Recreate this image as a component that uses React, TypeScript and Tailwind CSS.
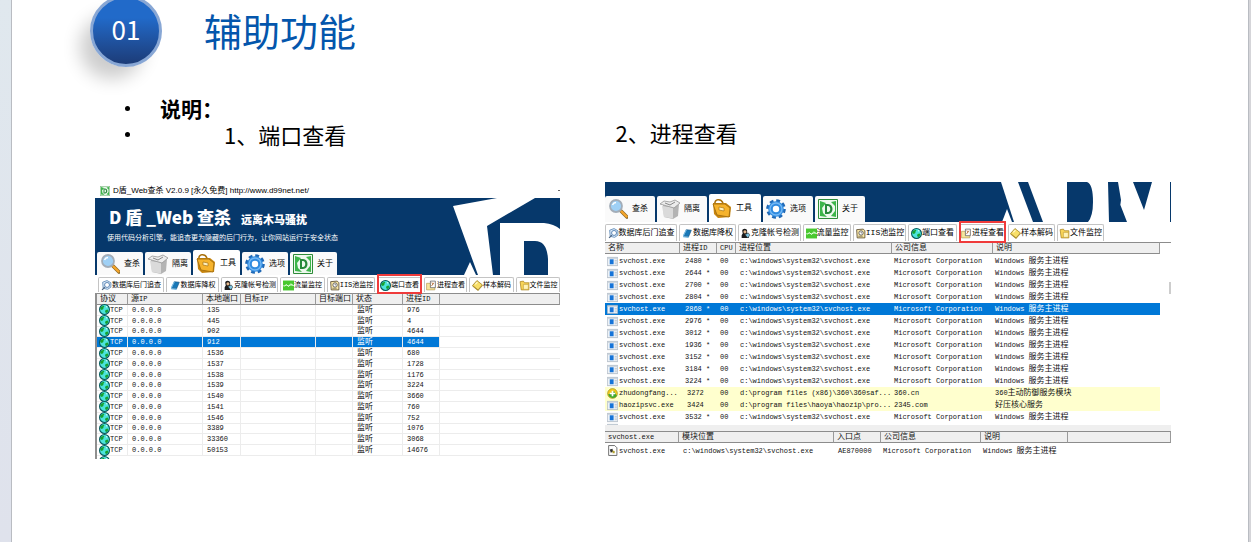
import React from "react";

type IconName =
  | "search" | "box" | "case" | "gear" | "logo"
  | "db" | "book" | "user" | "chart" | "note" | "globe" | "proc" | "gem" | "folder"
  | "exe" | "shield" | "module";

function Icon({ name, className }: { name: IconName; className: string }) {
  const art: Record<IconName, React.ReactNode> = {
    search: (
      <>
        <path d="M13 12l6 6" stroke="#8a6a2a" strokeWidth="3.6" strokeLinecap="round" />
        <path d="M13.5 12.5l5 5" stroke="#f5a52a" strokeWidth="2.4" strokeLinecap="round" />
        <circle cx="8" cy="7" r="6" fill="#9fd0f5" stroke="#a3adb8" strokeWidth="1.8" />
        <path d="M4.5 6a4 4 0 013.500-2.500" stroke="#fff" strokeWidth="1.400" fill="none" />
      </>
    ),
    box: (
      <>
        <path d="M3 6l10 2 6-3-1 12-5 3-9-2z" fill="#b4b4b4" />
        <path d="M2 7l11 1.500v11L4 18z" fill="#dadada" />
        <path d="M0 5l4-3 6 1 5-2 5 3-6 5z" fill="#ececec" stroke="#969696" strokeWidth=".8" />
        <path d="M5 4l5 2 5-3" stroke="#888" strokeWidth="1" fill="none" />
      </>
    ),
    case: (
      <>
        <path d="M3 6c-1-5 6-6 8-1" stroke="#a8700c" strokeWidth="1.600" fill="none" />
        <path d="M1 5l13 0 5 4-1 10-12 1-4-4z" fill="#c8860f" />
        <path d="M1 6l12 0 5 4-1 9-12-2z" fill="#f6b32c" stroke="#9b680c" strokeWidth=".8" />
        <path d="M7 9l5 1v3l-5-1z" fill="#fff0bd" stroke="#9b680c" strokeWidth=".6" />
      </>
    ),
    gear: (
      <>
        <circle cx="10" cy="10" r="8" fill="none" stroke="#1f68b5" strokeWidth="3.600" strokeDasharray="3.600 2.680" />
        <circle cx="10" cy="10" r="5.500" fill="#fff" stroke="#2f8be0" strokeWidth="4.600" />
        <circle cx="10" cy="10" r="6" fill="none" stroke="#74b8f4" strokeWidth="1.400" />
      </>
    ),
    logo: (
      <>
        <path d="M.5.500h19v19H.5z" fill="#eef8ee" stroke="#2e8c39" />
        <path d="M2 2l6 2-4 5 1 5 4 4-7-1zM18 18l-5-1 4-5V7l-4-4 5-1z" fill="#3db54a" />
        <path d="M7 5v10h3c6 0 6-10 0-10zm2 2h1c3 0 3 6 0 6H9z" fill="#27893a" fillRule="evenodd" />
      </>
    ),
    db: (
      <>
        <path d="M3 4l8-3 7 4v8l-6 4-8-2z" fill="#d9e9f8" stroke="#5b87b5" strokeWidth="1.500" />
        <circle cx="11" cy="9" r="4.500" fill="#fff" stroke="#4a78ab" strokeWidth="1.600" />
        <path d="M7 13l-5 5" stroke="#4d6684" strokeWidth="2.400" />
      </>
    ),
    book: (
      <>
        <path d="M8 3l9 1-5 12-9-1z" fill="#1878b8" stroke="#0c4a78" />
        <path d="M8 3L3 13v3l9 1" fill="none" stroke="#72b9e4" strokeWidth="2" />
      </>
    ),
    user: (
      <>
        <path d="M4 5c0-5 9-5 9 0v4l3 4v5H3v-5l2-3z" fill="#1c1c1c" />
        <circle cx="9" cy="7" r="2.800" fill="#e5b88b" />
        <path d="M9 12l6-3 3 4-4 5z" fill="#7cc3e0" stroke="#222" />
      </>
    ),
    chart: (
      <>
        <path d="M0 1h20v18H0z" fill="#49c830" />
        <path d="M0 10h20" stroke="#d7ffd0" />
        <path d="M2 12l4-4 4 4 4-5 5 3" stroke="#e9ffe4" strokeWidth="1.800" fill="none" />
      </>
    ),
    note: (
      <>
        <path d="M3 3l12-1 3 3v13H4z" fill="#fbe9a8" stroke="#57492c" strokeWidth="1.500" />
        <circle cx="11" cy="9" r="4" fill="#fff" stroke="#444" strokeWidth="1.400" />
        <path d="M11 6.500V9h2M6 15h8" stroke="#333" fill="none" />
      </>
    ),
    globe: (
      <>
        <circle cx="10" cy="10" r="9" fill="#4be3dc" stroke="#08595c" strokeWidth="2" />
        <path d="M3 6l5-3 2 1-2 3 0 2-3 2-3-2zM12 11l4-1 1 3-4 4-2-3z" fill="#16a22e" />
        <path d="M12 3l4 2-2 2z" fill="#e6fffa" />
      </>
    ),
    proc: (
      <>
        <path d="M1 6h6l2 2h7v10H1z" fill="#f7e59b" stroke="#a58b3c" />
        <path d="M8 2h9v12H8z" fill="#fff" stroke="#555" strokeWidth="1.300" />
        <path d="M10 11l4-6M10 5l4 2" stroke="#b0662b" strokeWidth="1.500" />
      </>
    ),
    gem: (
      <>
        <path d="M9 1l10 8-8 9-10-8z" fill="#f8df69" stroke="#9a7a1c" strokeWidth="1.400" />
        <path d="M1 10l10 8 8-9v2l-8 9L1 12z" fill="#a98b28" />
        <path d="M6 8l4-4" stroke="#fff9d5" strokeWidth="2" />
      </>
    ),
    folder: (
      <>
        <path d="M2 3l6-1 2 3h8v13H4z" fill="#f8d458" stroke="#a5801a" strokeWidth="1.300" />
        <path d="M8 8h9v9H8z" fill="#fff3b8" stroke="#b9952f" />
      </>
    ),
    exe: (
      <>
        <path d="M.5 2.500h19v15H.5z" fill="#eef2f6" stroke="#8a98a8" />
        <path d="M1 3h18v2H1z" fill="#c3ced9" />
        <path d="M5 6h7v9H5z" fill="#1674d8" />
        <path d="M14 8h4M14 11h4M14 14h4" stroke="#9aa9b8" />
      </>
    ),
    shield: (
      <>
        <circle cx="10" cy="10" r="9" fill="#f3c81c" stroke="#8b8a1d" />
        <path d="M2 12a9 9 0 0016 2l-5-8z" fill="#41a82e" />
        <path d="M10 5v10M5 10h10" stroke="#fff" strokeWidth="3" />
      </>
    ),
    module: (
      <>
        <path d="M3 1h11l4 4v14H3z" fill="#fff" stroke="#555" strokeWidth="1.500" />
        <path d="M5 8l5-1 1 5-4 2z" fill="#333" />
        <path d="M10 10l4 1v4h-4z" fill="#b3a22e" />
      </>
    ),
  };
  return (
    <svg viewBox="0 0 20 20" fill="none" aria-hidden="true" className={"shrink-0 " + className}>
      {art[name]}
    </svg>
  );
}

/* Sets Latin runs one step smaller than the Chinese around them. */
function Mix({ text }: { text: string }) {
  const runs = text.split(/([\u4e00-\u9fff]+)/).filter(Boolean);
  return (
    <>
      {runs.map((run, i) =>
        /[\u4e00-\u9fff]/.test(run) ? (
          <span key={i}>{run}</span>
        ) : (
          <span key={i} className="text-[7px]">{run}</span>
        )
      )}
    </>
  );
}

type Tab = { icon: IconName; label: string; size: string };

function MainTabs({ tabs }: { tabs: Tab[] }) {
  return (
    <nav className="flex h-full items-end gap-[2px]">
      {tabs.map((t) => (
        <button
          key={t.label}
          type="button"
          className={
            "flex items-center gap-1 rounded-t-[2px] pl-[3px] text-[8px] leading-none text-black " +
            (t.label === "工具" ? "h-full bg-white " : "h-[calc(100%-2px)] bg-[#fafafa] ") +
            t.size
          }
        >
          <Icon name={t.icon} className="size-5" />
          <span>{t.label}</span>
        </button>
      ))}
    </nav>
  );
}

function SubTabs({ tabs, active, text }: { tabs: Tab[]; active: string; text: string }) {
  return (
    <nav className="flex gap-[2px] whitespace-nowrap">
      {tabs.map((t) => (
        <button
          key={t.label}
          type="button"
          className={
            "relative flex items-center justify-center rounded-t-[2px] border border-b-0 border-[#c4c4c4] bg-white leading-none text-black " +
            text + " " + t.size
          }
        >
          <Icon name={t.icon} className="size-[11px]" />
          <span>{t.label}</span>
          {t.label === active && (
            <span className="absolute -inset-x-px -top-[4px] -bottom-[2px] z-10 border-2 border-[#ef3b3b]" />
          )}
        </button>
      ))}
    </nav>
  );
}

const leftMain: Tab[] = [
  { icon: "search", label: "查杀", size: "w-[46px]" },
  { icon: "box", label: "隔离", size: "w-[46px]" },
  { icon: "case", label: "工具", size: "w-[47px]" },
  { icon: "gear", label: "选项", size: "w-[46px]" },
  { icon: "logo", label: "关于", size: "w-[47px]" },
];
const rightMain: Tab[] = [
  { icon: "search", label: "查杀", size: "w-[50px]" },
  { icon: "box", label: "隔离", size: "w-[50px]" },
  { icon: "case", label: "工具", size: "w-[52px]" },
  { icon: "gear", label: "选项", size: "w-[50px]" },
  { icon: "logo", label: "关于", size: "w-[50px]" },
];
const leftSub: Tab[] = [
  { icon: "db", label: "数据库后门追查", size: "w-[66px]" },
  { icon: "book", label: "数据库降权", size: "w-[53px]" },
  { icon: "user", label: "克隆帐号检测", size: "w-[57px]" },
  { icon: "chart", label: "流量监控", size: "w-[45px]" },
  { icon: "note", label: "IIS池监控", size: "w-[48px]" },
  { icon: "globe", label: "端口查看", size: "w-[45px]" },
  { icon: "proc", label: "进程查看", size: "w-[43px]" },
  { icon: "gem", label: "样本解码", size: "w-[45px]" },
  { icon: "folder", label: "文件监控", size: "w-[44px]" },
];
const rightSub: Tab[] = [
  { icon: "db", label: "数据库后门追查", size: "w-[72px]" },
  { icon: "book", label: "数据库降权", size: "w-[57px]" },
  { icon: "user", label: "克隆帐号检测", size: "w-[63px]" },
  { icon: "chart", label: "流量监控", size: "w-[48px]" },
  { icon: "note", label: "IIS池监控", size: "w-[53px]" },
  { icon: "globe", label: "端口查看", size: "w-[49px]" },
  { icon: "proc", label: "进程查看", size: "w-[47px]" },
  { icon: "gem", label: "样本解码", size: "w-[47px]" },
  { icon: "folder", label: "文件监控", size: "w-[47px]" },
];

const ports: [string, string][] = [
  ["135", "976"], ["445", "4"], ["902", "4644"], ["912", "4644"], ["1536", "680"],
  ["1537", "1728"], ["1538", "1176"], ["1539", "3224"], ["1540", "3660"], ["1541", "760"],
  ["1546", "752"], ["3389", "1076"], ["33360", "3068"], ["50153", "14676"],
];

type Proc = { name: string; pid: string; path: string; company: string; note: string; icon: IconName; warn?: boolean };
const svc = (pid: string): Proc => ({
  name: "svchost.exe",
  pid: pid + " *",
  path: "c:\\windows\\system32\\svchost.exe",
  company: "Microsoft Corporation",
  note: "Windows 服务主进程",
  icon: "exe",
});
const procs: Proc[] = [
  ...["2480", "2644", "2700", "2804", "2868", "2976", "3012", "1936", "3152", "3184", "3224"].map(svc),
  { name: "zhudongfang...", pid: "3272", path: "d:\\program files (x86)\\360\\360saf...", company: "360.cn", note: "360主动防御服务模块", icon: "shield", warn: true },
  { name: "haozipsvc.exe", pid: "3424", path: "d:\\program files\\haoya\\haozip\\pro...", company: "2345.com", note: "好压核心服务", icon: "exe", warn: true },
  svc("3532"),
];

function HeadRow({ labels }: { labels: string[] }) {
  return (
    <thead>
      <tr className="h-3 bg-[#efefef]">
        {labels.map((l, i) => (
          <th
            key={i}
            scope="col"
            className="border-t border-r border-b border-t-[#8c8c8c] border-r-[#9a9a9a] border-b-[#8c8c8c] p-0 pl-[3px] text-left text-[8px] leading-[10px] font-normal"
          >
            <Mix text={l} />
          </th>
        ))}
      </tr>
    </thead>
  );
}

function PortTable() {
  const cell = "border-r border-b border-[#ececec] p-0 pl-1";
  return (
    <div className="h-[166px] overflow-hidden border-l-2 border-[#8f8f8f]">
      <table className="h-[163px] w-full table-fixed border-separate border-spacing-0 whitespace-nowrap text-[8px] leading-[8px] text-[#111]">
        <colgroup>
          <col className="w-[31px]" />
          <col className="w-[75px]" />
          <col className="w-[38px]" />
          <col className="w-[75px]" />
          <col className="w-[37px]" />
          <col className="w-[50px]" />
          <col className="w-[37px]" />
          <col />
        </colgroup>
        <HeadRow labels={["协议", "源IP", "本地端口", "目标IP", "目标端口", "状态", "进程ID", ""]} />
        <tbody>
          {ports.map(([port, pid], i) => {
            const c = cell + (i === 3 ? " bg-[#0078d7] text-white" : "");
            return (
              <tr key={port}>
                <td className={c + " !pl-[2px]"}>
                  <span className="flex items-center">
                    <Icon name="globe" className="-my-[2px] size-[11px]" />
                    <Mix text="TCP" />
                  </span>
                </td>
                <td className={c}><Mix text="0.0.0.0" /></td>
                <td className={c}><Mix text={port} /></td>
                <td className={c} />
                <td className={c} />
                <td className={c}>监听</td>
                <td className={c}><Mix text={pid} /></td>
                <td className="border-b border-[#ececec] p-0" />
              </tr>
            );
          })}
        </tbody>
      </table>
      <Icon name="globe" className="ml-[2px] size-[11px]" />
    </div>
  );
}

function ProcessTable() {
  return (
    <table className="w-full table-fixed border-separate border-spacing-0 whitespace-nowrap text-[8px] leading-[10px] text-[#111]">
      <colgroup>
        <col className="w-[75px]" />
        <col className="w-[37px]" />
        <col className="w-[19px]" />
        <col className="w-[156px]" />
        <col className="w-[101px]" />
        <col />
      </colgroup>
      <HeadRow labels={["名称", "进程ID", "CPU", "进程位置", "公司信息", "说明"]} />
      <tbody>
        <tr className="h-px" aria-hidden="true"><td colSpan={6} className="p-0" /></tr>
        {procs.map((p, i) => (
          <tr
            key={p.pid}
            className={"h-3 " + (i === 4 ? "bg-[#0078d7] text-white" : p.warn ? "bg-[#ffffce]" : "")}
          >
            <td className="p-0 pl-[2px]">
              <span className="flex items-center gap-px">
                <Icon name={p.icon} className="size-[11px]" />
                <Mix text={p.name} />
              </span>
            </td>
            <td className={"p-0 " + (p.warn ? "pl-[7px]" : "pl-[5px]")}><Mix text={p.pid} /></td>
            <td className="p-0 pl-[3px]"><Mix text="00" /></td>
            <td className="p-0 pl-1"><Mix text={p.path} /></td>
            <td className="p-0 pl-[2px]"><Mix text={p.company} /></td>
            <td className="p-0 pl-[2px]"><Mix text={p.note} /></td>
          </tr>
        ))}
      </tbody>
    </table>
  );
}

function ModuleTable() {
  return (
    <table className="w-full table-fixed border-separate border-spacing-0 whitespace-nowrap text-[8px] leading-[10px] text-[#111]">
      <colgroup>
        <col className="w-[74px]" />
        <col className="w-[155px]" />
        <col className="w-[47px]" />
        <col className="w-[100px]" />
        <col className="w-[87px]" />
        <col />
      </colgroup>
      <HeadRow labels={["svchost.exe", "模块位置", "入口点", "公司信息", "说明", ""]} />
      <tbody>
        <tr className="h-[15px]">
          <td className="p-0 pl-[2px]">
            <span className="flex items-center gap-px">
              <Icon name="module" className="size-[11px]" />
              <Mix text="svchost.exe" />
            </span>
          </td>
          <td className="p-0 pl-1"><Mix text="c:\windows\system32\svchost.exe" /></td>
          <td className="p-0 pl-1"><Mix text="AE870000" /></td>
          <td className="p-0 pl-[2px]"><Mix text="Microsoft Corporation" /></td>
          <td className="p-0 pl-[2px]"><Mix text="Windows 服务主进程" /></td>
          <td className="p-0" />
        </tr>
      </tbody>
    </table>
  );
}

const uiFont = "font-['Liberation_Mono','Noto_Sans_CJK_SC',monospace]";

function PortWindow() {
  return (
    <section className={"min-w-0 overflow-hidden bg-white " + uiFont}>
      <div className="flex h-4 items-center gap-[3px] pl-[5px] pt-px font-['Liberation_Sans','Noto_Sans_CJK_SC',sans-serif] text-[8px] text-black">
        <Icon name="logo" className="size-[10px]" />
        <span>D盾_Web查杀 V2.0.9 [永久免费] http://www.d99net.net/</span>
        <span className="ml-auto h-px w-[2px] bg-[#666]" />
      </div>
      <div className="relative flex h-[77px] flex-col bg-[#06386b] text-white">
        <svg viewBox="0 0 107 77" className="absolute top-0 right-0 h-full w-[107px]" aria-hidden="true">
          <path fill="#fff" d="M0 8L44 0h38L34 28l6 49H25z" />
          <path fill="#fff" d="M11 77l6-13 6 13z" />
          <path fill="#fff" fillRule="evenodd" d="M47 25h44q10 1 16 6v46H47zM71 43v34h24V61q-1-18-13-18z" />
        </svg>
        <div className="flex flex-1 flex-col gap-px pt-[6px] pl-3 font-['Noto_Sans_CJK_SC',sans-serif]">
          <h2 className="flex items-center gap-[10px] pl-[2px] leading-[22px] font-black">
            <span className="text-[17px]">D 盾 _Web 查杀</span>
            <span className="pt-[4px] text-[11px]">远离木马骚扰</span>
          </h2>
          <p className="text-[7px] leading-3">使用代码分析引擎，能追查更为隐藏的后门行为，让你网站运行于安全状态</p>
        </div>
        <div className="h-[25px] pl-[2px]"><MainTabs tabs={leftMain} /></div>
      </div>
      <div className="flex h-[18px] pt-[2px] pb-px pl-[3px]">
        <SubTabs tabs={leftSub} active="端口查看" text="text-[7px]" />
      </div>
      <PortTable />
    </section>
  );
}

function ProcessWindow() {
  return (
    <section className={"min-w-0 overflow-hidden bg-white " + uiFont}>
      <div className="relative h-10 bg-[#06386b] pt-3">
        <svg viewBox="0 0 172 40" className="absolute top-0 right-0 h-full w-[172px]" aria-hidden="true">
          <path fill="#fff" d="M2 0H19L34 40H15z" />
          <path fill="#fff" d="M3 40l5-13 5 13z" />
          <path fill="#fff" d="M29 0H171v40H44z" />
          <path fill="#06386b" d="M68 0h20q6 2 6 20 0 14-5 20H68zM109 0h10l3 18-3 22h-9zM121 22l7 18h-9zM134 0h19l-8 28z" />
        </svg>
        <div className="relative h-7"><MainTabs tabs={rightMain} /></div>
      </div>
      <div className="flex h-5 pt-[2px] pb-px">
        <SubTabs tabs={rightSub} active="进程查看" text="text-[8px]" />
      </div>
      <div className="flex h-[183px] overflow-hidden">
        <div className="min-w-0 flex-1"><ProcessTable /><Icon name="exe" className="ml-[2px] size-[11px]" /></div>
        <div className="w-[11px] border-t border-[#8c8c8c] pt-[39px] pl-[9px]"><div className="h-3 bg-[#cdcdcd]" /></div>
      </div>
      <div className="h-[6px] bg-[#efefef]" />
      <div className="h-7 overflow-hidden"><ModuleTable /></div>
    </section>
  );
}

export default function App() {
  return (
    <div className="flex min-h-screen bg-gradient-to-b from-[#e0e8ee] to-[#dfe2ec] pl-[11px] font-['Noto_Sans_CJK_SC',sans-serif]">
      <main className="flex-1 overflow-hidden border-x border-[#b9bcc2] bg-white">
        <header className="flex items-start gap-[42px] pl-[78px]">
          <div className="-mt-[5px] flex size-[72px] items-center justify-center rounded-full border-[3px] border-[#88a7d5] bg-gradient-to-b from-[#216ac9] from-30% to-[#1c3c78] pb-1 text-[26px] leading-none text-white shadow-[-14px_16px_18px_-4px_rgba(0,0,0,0.2)]">
            01
          </div>
          <h1 className="pt-[5px] text-[38px] leading-[50px] text-[#0456ac]">辅助功能</h1>
        </header>
        <div className="mt-[28px] grid grid-cols-[487fr_628fr] pl-[113px] text-[22px] leading-[26px] text-black">
          <ul>
            <li className="flex items-center">
              <span className="size-[5px] rounded-full bg-black" />
              <strong className="pl-[30px] text-[21px]">说明：</strong>
            </li>
            <li className="flex items-center">
              <span className="size-[5px] rounded-full bg-black" />
              <span className="pl-[94px]">1、端口查看</span>
            </li>
          </ul>
          <p className="pt-[24px]">2、进程查看</p>
        </div>
        <div className="mt-[35px] grid grid-cols-[465fr_566fr] gap-[45px] pr-[77px] pl-[83px]">
          <PortWindow />
          <ProcessWindow />
        </div>
      </main>
      <div className="w-[2px] bg-[#d5d5d9]" />
    </div>
  );
}
